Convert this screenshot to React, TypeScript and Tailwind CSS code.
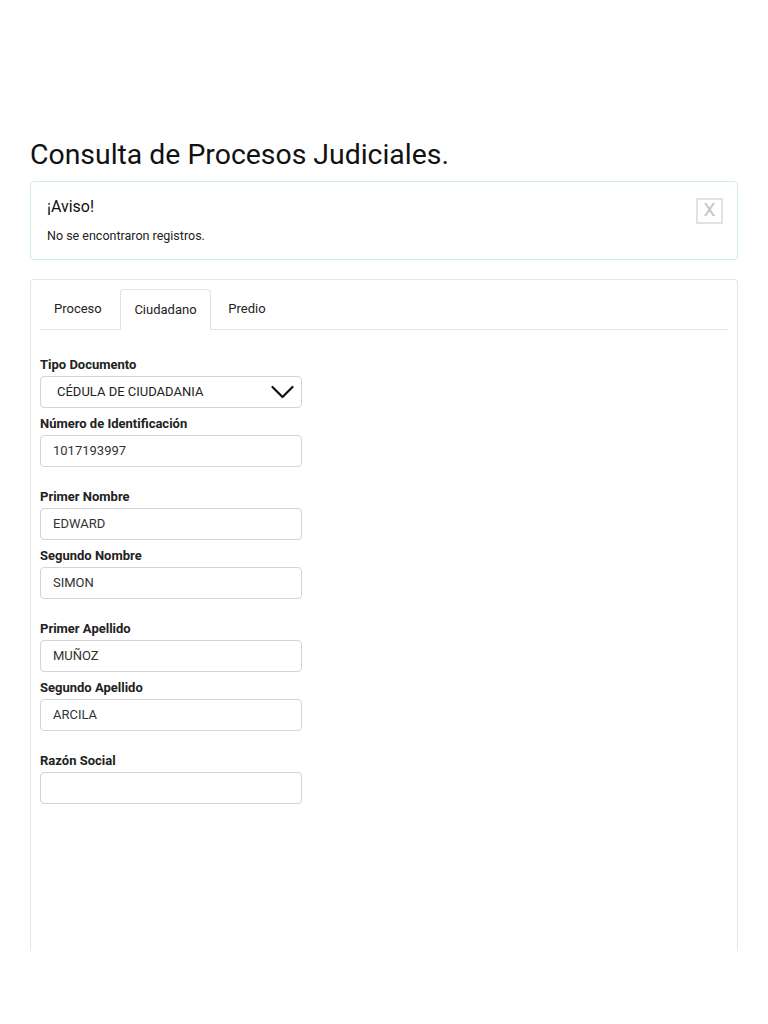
import React from 'react';

const font = { fontFamily: 'Roboto, "Liberation Sans", sans-serif' };

const Field = ({ label, value, gap }: { label: string; value: string; gap?: boolean }) => (
  <div className={gap ? 'mt-[14px]' : ''}>
    <div className="pt-[6px] pb-px text-[13px] leading-5 font-bold text-[#222]">{label}</div>
    <div className="w-[262px] h-8 border border-[#d4d4d4] rounded-[4px] flex items-center px-3 text-[13px] text-[#333]">
      {value}
    </div>
  </div>
);

const App = () => {
  return (
    <div className="w-[768px] h-[1024px] bg-white overflow-hidden" style={font}>
      <div className="pt-[138px] px-[30px]">
        <h1 className="text-[28.4px] leading-[34px] text-[#111] font-normal">
          Consulta de Procesos Judiciales.
        </h1>

        {/* Alert */}
        <div className="mt-[9px] h-[79px] border border-[#cfeaf0] rounded-[4px] px-4 pt-[15px] flex justify-between">
          <div>
            <div className="text-[16px] leading-5 text-[#111]">¡Aviso!</div>
            <div className="mt-[11px] text-[12.5px] leading-4 text-[#222]">No se encontraron registros.</div>
          </div>
          <div className="mt-px mr-[-2px] w-[27px] h-[26px] border-2 border-[#e2e2e2] flex items-center justify-center text-[19px] leading-none text-[#c4c4c4] pb-[3px]">
            X
          </div>
        </div>

        {/* Panel */}
        <div className="mt-[19px] h-[672px] border border-b-0 border-[#e6e6e6] rounded-t-[4px] px-[9px] pt-[9px]">
          <div className="flex border-b border-[#e2e2e2] h-[41px] text-[13px] text-[#222]">
            <div className="w-[80px] flex items-center pl-[14px]">Proceso</div>
            <div className="w-[91px] flex items-center justify-center border border-b-0 border-[#e2e2e2] rounded-t-[4px] bg-white -mb-px">
              Ciudadano
            </div>
            <div className="w-[72px] flex items-center justify-center">Predio</div>
          </div>

          <div className="pt-[19px]">
            <div className="pt-[6px] pb-px text-[13px] leading-5 font-bold text-[#222]">Tipo Documento</div>
            <div className="w-[262px] h-8 border border-[#d4d4d4] rounded-[4px] flex items-center justify-between pl-4 pr-[7px] text-[13px] text-[#222]">
              <span>CÉDULA DE CIUDADANIA</span>
              <svg width="23" height="14" viewBox="0 0 23 14" fill="none">
                <path d="M1.5 2 L11.5 12 L21.5 2" stroke="#111" strokeWidth="2.2" strokeLinecap="round" strokeLinejoin="round" />
              </svg>
            </div>
            <Field label="Número de Identificación" value="1017193997" />
            <Field label="Primer Nombre" value="EDWARD" gap />
            <Field label="Segundo Nombre" value="SIMON" />
            <Field label="Primer Apellido" value="MUÑOZ" gap />
            <Field label="Segundo Apellido" value="ARCILA" />
            <Field label="Razón Social" value="" gap />
          </div>
        </div>
      </div>
    </div>
  );
};

export default App;
